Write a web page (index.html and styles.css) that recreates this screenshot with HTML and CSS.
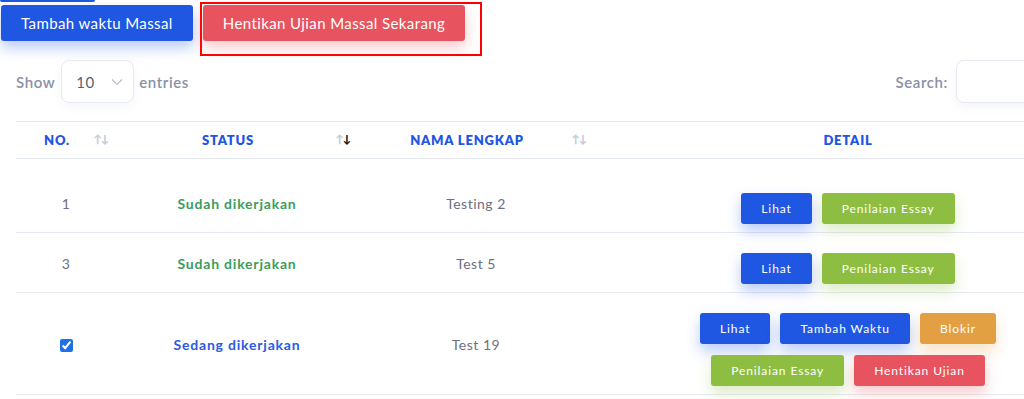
FILE: index.html
```html
<!DOCTYPE html>
<html lang="id">

<head>
  <meta charset="UTF-8">
  <meta name="viewport" content="width=device-width, initial-scale=1.0">
  <title>Peserta Ujian</title>
  <link rel="stylesheet" href="styles.css">
</head>

<body>
  <div class="page">
    <div class="top_bar"></div>

    <div class="mass_actions">
      <button class="btn btn_blue btn_big">Tambah waktu Massal</button>
      <div class="highlight">
        <button class="btn btn_red btn_big">Hentikan Ujian Massal Sekarang</button>
      </div>
    </div>

    <div class="controls">
      <label class="length">
        Show
        <span class="select">10
          <svg width="12" height="8" viewBox="0 0 12 8"><path d="M1 1.5l5 5 5-5" fill="none" stroke="#b9bfcc" stroke-width="1.2"/></svg>
        </span>
        entries
      </label>
      <label class="search">
        Search:
        <span class="search_input"></span>
      </label>
    </div>

    <table class="table">
      <colgroup>
        <col class="col_no">
        <col class="col_status">
        <col class="col_name">
        <col class="col_detail">
      </colgroup>
      <thead>
        <tr>
          <th class="sort">NO.<span class="arrows"><i>↑</i><i>↓</i></span></th>
          <th class="sort">STATUS<span class="arrows"><i>↑</i><i class="on">↓</i></span></th>
          <th class="sort">NAMA LENGKAP<span class="arrows"><i>↑</i><i>↓</i></span></th>
          <th>DETAIL</th>
        </tr>
      </thead>
      <tbody>
        <tr>
          <td>1</td>
          <td class="status done">Sudah dikerjakan</td>
          <td>Testing 2</td>
          <td>
            <div class="detail_actions">
              <button class="btn btn_blue">Lihat</button>
              <button class="btn btn_green">Penilaian Essay</button>
            </div>
          </td>
        </tr>
        <tr>
          <td>3</td>
          <td class="status done">Sudah dikerjakan</td>
          <td>Test 5</td>
          <td>
            <div class="detail_actions">
              <button class="btn btn_blue">Lihat</button>
              <button class="btn btn_green">Penilaian Essay</button>
            </div>
          </td>
        </tr>
        <tr>
          <td><input type="checkbox" class="check" checked></td>
          <td class="status working">Sedang dikerjakan</td>
          <td>Test 19</td>
          <td>
            <div class="detail_actions">
              <button class="btn btn_blue">Lihat</button>
              <button class="btn btn_blue">Tambah Waktu</button>
              <button class="btn btn_orange">Blokir</button>
              <button class="btn btn_green">Penilaian Essay</button>
              <button class="btn btn_red">Hentikan Ujian</button>
            </div>
          </td>
        </tr>
      </tbody>
    </table>
  </div>
</body>

</html>
```

FILE: styles.css
```css
html,
body {
  width: 100%;
  height: 100%;
  overflow: hidden;
}

body {
  margin: 0;
  background: #fff;
  font-family: 'Lato', 'Noto Sans', sans-serif;
}

.page {
  width: 1102px;
}

.top_bar {
  width: 95px;
  height: 2px;
  background: #1f56e2;
  border-radius: 0 0 4px 4px;
}

.mass_actions {
  display: flex;
  align-items: flex-start;
}

.btn {
  border: none;
  color: #fff;
  font-family: inherit;
  font-size: 12px;
  letter-spacing: 0.9px;
  height: 31px;
  padding: 0 20px;
  border-radius: 3px;
}

.btn_big {
  height: 36px;
  font-size: 15px;
  letter-spacing: 0.4px;
  padding: 0 20px;
}

.mass_actions > .btn {
  margin: 3px 0 0 1px;
}

.btn_blue {
  background: #1f57e3;
  box-shadow: 0 7px 14px rgba(31, 87, 227, 0.3);
}

.btn_red {
  background: #e7535e;
  box-shadow: 0 7px 14px rgba(231, 83, 94, 0.3);
}

.btn_green {
  background: #8dbe41;
  box-shadow: 0 7px 14px rgba(141, 190, 65, 0.3);
}

.btn_orange {
  background: #e3a042;
  box-shadow: 0 7px 14px rgba(227, 160, 66, 0.3);
}

.highlight {
  margin-left: 7px;
  width: 277px;
  height: 49px;
  border: 2px solid #f00;
  padding: 1px 0 0 1px;
}

.controls {
  display: flex;
  justify-content: space-between;
  align-items: center;
  margin-top: 4px;
  padding-left: 16px;
  color: #8a90a6;
  font-size: 15px;
  font-weight: 600;
  letter-spacing: 0.6px;
}

.length,
.search {
  display: flex;
  align-items: center;
}

.select {
  display: flex;
  align-items: center;
  justify-content: space-between;
  box-sizing: border-box;
  width: 73px;
  height: 43px;
  margin: 0 5px 0 6px;
  padding: 0 10px 0 14px;
  border: 1px solid #e6e9f0;
  border-radius: 8px;
  color: #5a5f70;
  font-weight: 400;
  box-shadow: 0 4px 10px rgba(140, 150, 180, 0.08);
}

.search_input {
  box-sizing: border-box;
  width: 146px;
  height: 43px;
  margin-left: 8px;
  border: 1px solid #e6e9f0;
  border-radius: 8px;
  box-shadow: 0 4px 10px rgba(140, 150, 180, 0.1);
}

.table {
  margin: 18px 0 0 16px;
  width: 1086px;
  table-layout: fixed;
  border-collapse: collapse;
  color: #6c7080;
  font-size: 14px;
  letter-spacing: 0.5px;
}

.col_no {
  width: 100px;
}

.col_status {
  width: 242px;
}

.col_name {
  width: 236px;
}

.table th {
  position: relative;
  border-top: 1px solid #e4e8f1;
  border-bottom: 1px solid #e4e8f1;
  padding: 9px 12px;
  line-height: 18px;
  color: #1f56e2;
  font-size: 13px;
  font-weight: 800;
  letter-spacing: 0.8px;
}

.table th.sort {
  padding-right: 30px;
}

.arrows {
  position: absolute;
  right: 8px;
  top: 8px;
  font-size: 11px;
  letter-spacing: -1px;
  color: #c8ccd6;
}

.arrows i {
  font-style: normal;
}

.arrows .on {
  color: #222;
}

.table td {
  border-bottom: 1px solid #e6eaf2;
  padding: 9px 12px 8px;
  text-align: center;
  vertical-align: middle;
}

.table tbody tr:first-child td {
  padding-top: 23px;
}

.status {
  font-weight: 700;
  letter-spacing: 0.8px;
}

.done {
  color: #3a9d5c;
}

.working {
  color: #2a5be2;
}

.check {
  margin: 0;
  accent-color: #1f6fe8;
  vertical-align: middle;
}

.detail_actions {
  display: flex;
  flex-wrap: wrap;
  justify-content: center;
  column-gap: 10px;
  max-width: 340px;
  margin: 0 auto;
}

.detail_actions .btn {
  margin-top: 11px;
}
```
